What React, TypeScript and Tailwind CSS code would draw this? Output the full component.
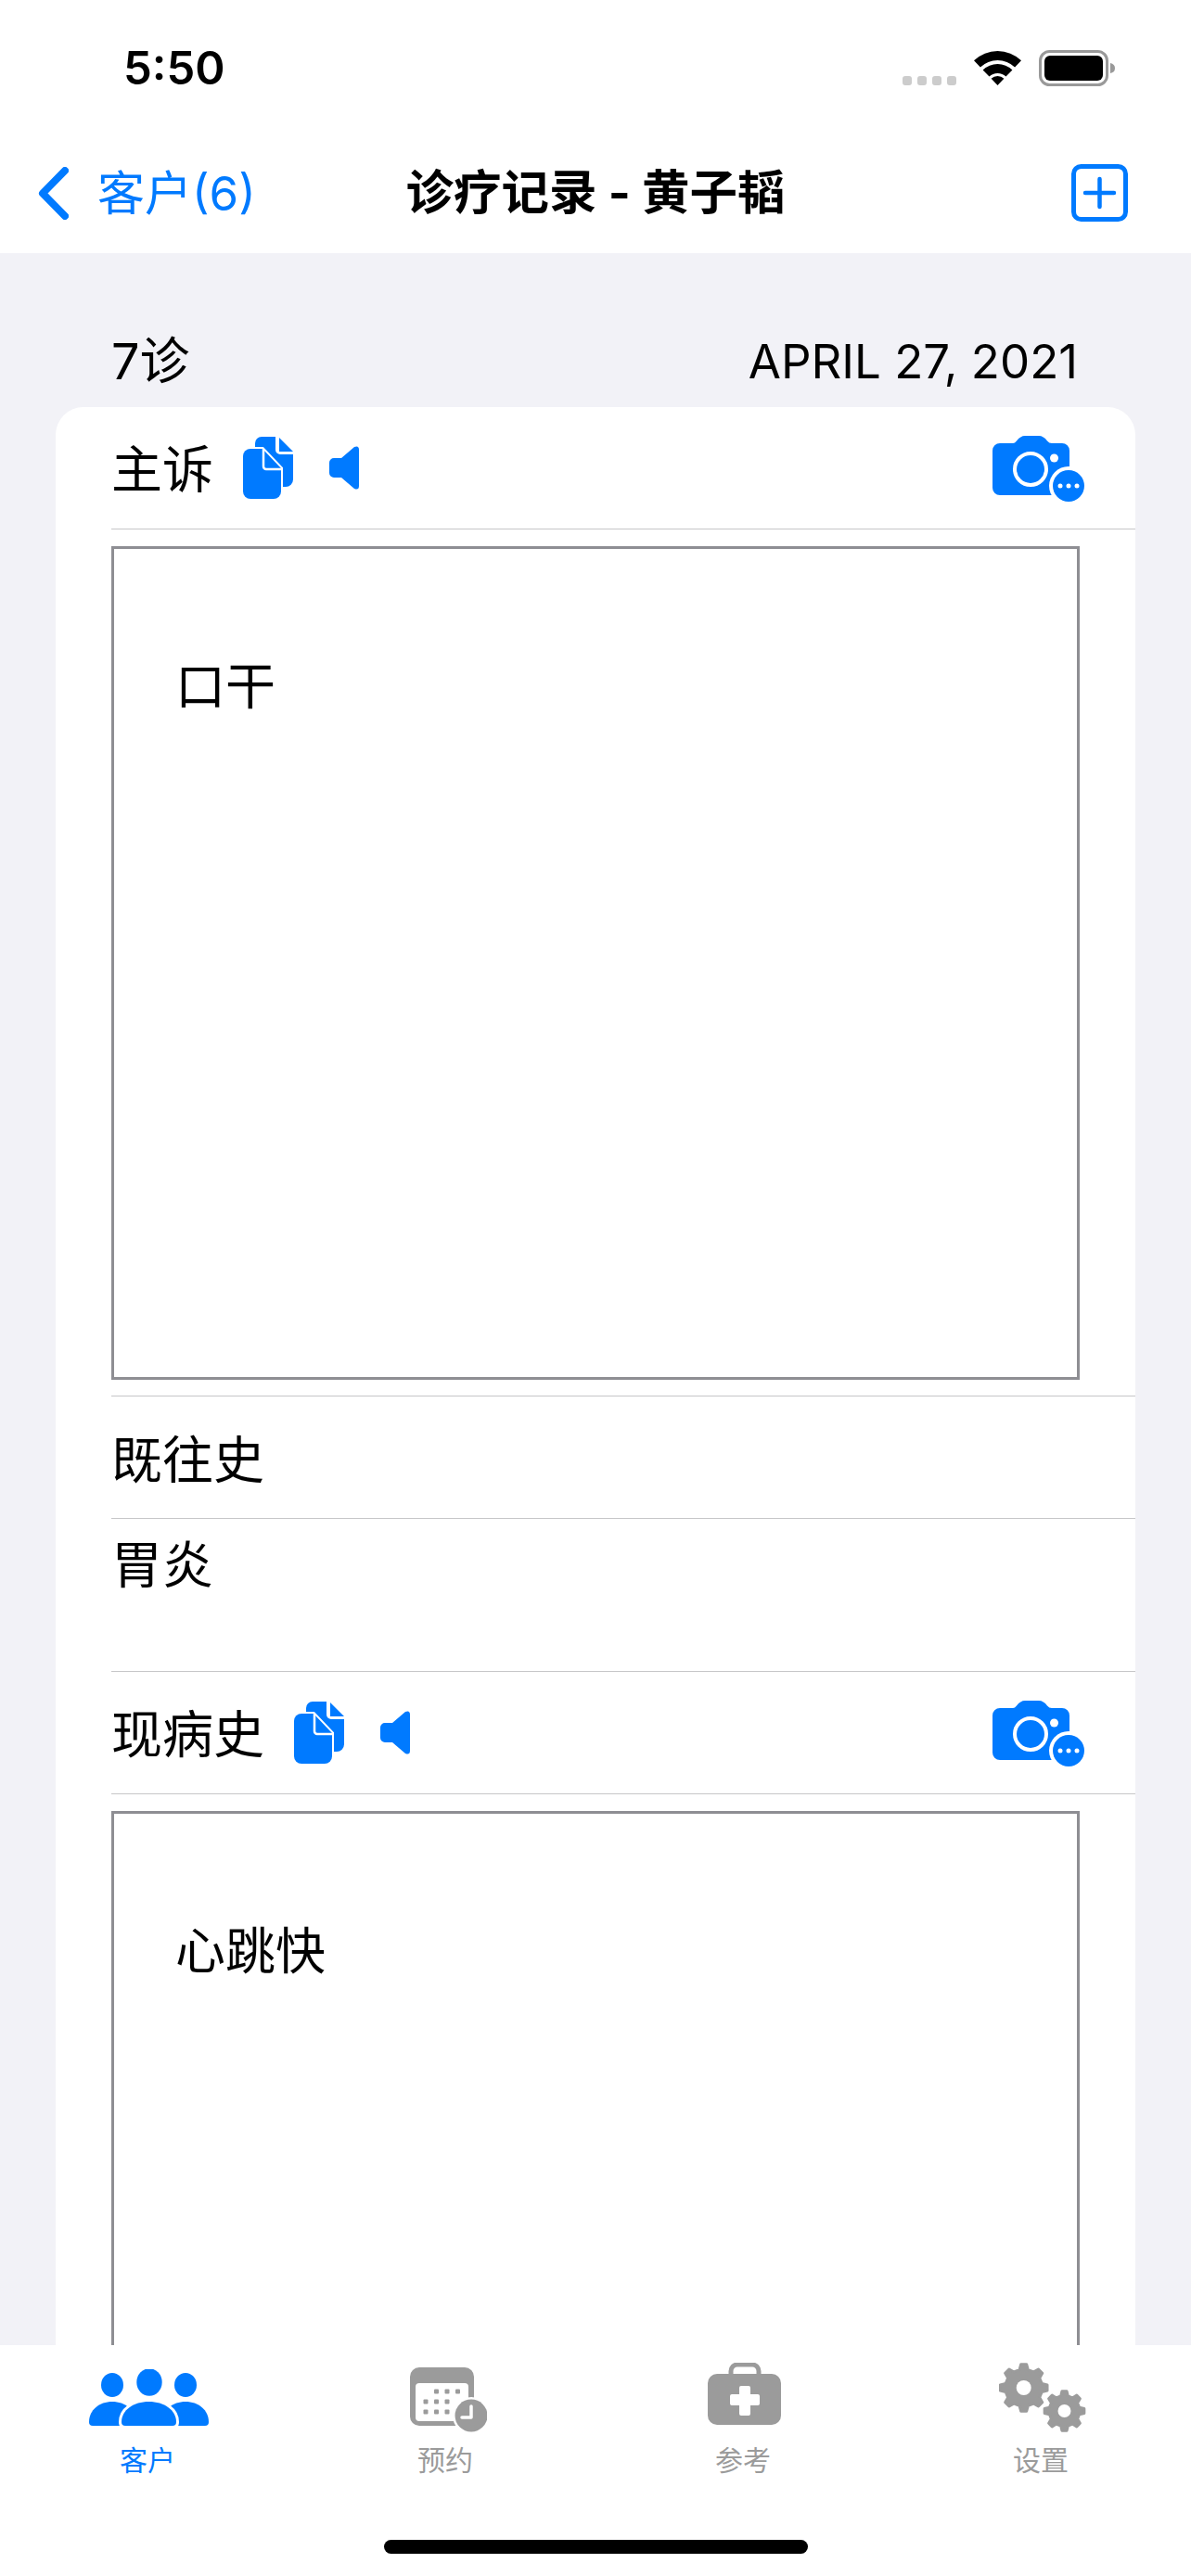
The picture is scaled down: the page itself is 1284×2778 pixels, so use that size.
import React from "react";

const BLUE = "#007aff";
const GREY = "#9b9b9b";

// outline of a cog with n teeth, in the svg's own pixels
const gearPath = (cx: number, cy: number, outer: number, root: number, n: number) => {
  const pts: string[] = [];
  const step = (Math.PI * 2) / n;
  for (let i = 0; i < n; i++) {
    const a = i * step - Math.PI / 2;
    [
      [root, a - step * 0.3],
      [outer, a - step * 0.15],
      [outer, a + step * 0.15],
      [root, a + step * 0.3],
    ].forEach(([r, t]) => {
      pts.push(`${(cx + r * Math.cos(t)).toFixed(2)} ${(cy + r * Math.sin(t)).toFixed(2)}`);
    });
  }
  return `M${pts.join("L")}Z`;
};

const DocIcon = () => (
  <svg width="54" height="67" viewBox="0 0 54 67" className="shrink-0">
    <path fill={BLUE} d="M20 0H35V14a5 5 0 0 0 5 5H54V46a8 8 0 0 1-8 8H20a7 7 0 0 1-7-7V7a7 7 0 0 1 7-7z" />
    <path fill={BLUE} d="M39 1L54 16H39z" />
    <path
      fill={BLUE}
      stroke="#fff"
      strokeWidth="4"
      style={{ paintOrder: "stroke" }}
      d="M8 13H21L41 34V59a8 8 0 0 1-8 8H8a8 8 0 0 1-8-8V21a8 8 0 0 1 8-8z"
    />
    <path fill="none" stroke="#fff" strokeWidth="2.5" d="M22 13V32a3 3 0 0 0 3 3H43" />
  </svg>
);

const SpeakerIcon = () => (
  <svg width="32" height="47" viewBox="0 0 32 47" className="shrink-0">
    <path fill={BLUE} d="M5 13H13L27 1Q32-1 32 4V43Q32 48 27 46L13 34H5a5 5 0 0 1-5-5V18a5 5 0 0 1 5-5z" />
  </svg>
);

const CameraIcon = () => (
  <svg width="99" height="71" viewBox="0 0 99 71" className="shrink-0">
    <path
      fill={BLUE}
      d="M8 8H22Q24 8 26 5.500Q30 0 35 0H50Q55 0 59 5.500Q61 8 64 8H75a8 8 0 0 1 8 8V56a8 8 0 0 1-8 8H8a8 8 0 0 1-8-8V16a8 8 0 0 1 8-8z"
    />
    <circle cx="41" cy="36" r="17" fill="none" stroke="#fff" strokeWidth="4" />
    <circle cx="66.500" cy="24" r="4.500" fill="#fff" />
    <circle cx="82" cy="54" r="21" fill="#fff" />
    <circle cx="82" cy="54" r="17" fill={BLUE} />
    <circle cx="73" cy="54" r="2.500" fill="#fff" />
    <circle cx="82" cy="54" r="2.500" fill="#fff" />
    <circle cx="91" cy="54" r="2.500" fill="#fff" />
  </svg>
);

const PeopleIcon = () => (
  <svg width="129" height="61" viewBox="0 0 129 61">
    <ellipse cx="25" cy="17" rx="12" ry="13" fill={BLUE} />
    <ellipse cx="104" cy="17" rx="12" ry="13" fill={BLUE} />
    <ellipse cx="65" cy="14" rx="13.700" ry="14.700" fill={BLUE} />
    <path fill={BLUE} d="M0 57C0 44 11 35 25 35S50 44 50 57Q50 61 46 61H4Q0 61 0 57z" />
    <path fill={BLUE} d="M79 57C79 44 90 35 104 35S129 44 129 57Q129 61 125 61H83Q79 61 79 57z" />
    <path
      fill={BLUE}
      stroke="#fff"
      strokeWidth="6"
      style={{ paintOrder: "stroke" }}
      d="M35 57C35 44 48 35 64.500 35S94 44 94 57Q94 61 90 61H39Q35 61 35 57z"
    />
  </svg>
);

const CalendarIcon = () => {
  const dots = [
    [28.500, 26], [40, 26], [51.500, 26],
    [17, 37], [28.500, 37], [40, 37],
    [17, 48], [28.500, 48], [40, 48],
  ];
  return (
    <svg width="83" height="70" viewBox="0 0 83 70" className="ml-[4px] mt-[5px]">
      <rect x="0" y="0" width="69" height="63" rx="10" fill={GREY} />
      <rect x="6" y="17" width="57" height="41" rx="4" fill="#fff" />
      {dots.map(([x, y]) => (
        <rect key={`${x}-${y}`} x={x - 2.500} y={y - 2.500} width="5" height="5" rx="1" fill={GREY} />
      ))}
      <circle cx="66" cy="52" r="20" fill="#fff" />
      <circle cx="66" cy="52" r="17.500" fill={GREY} />
      <path d="M66 42V54H56" fill="none" stroke="#fff" strokeWidth="3.500" strokeLinecap="round" strokeLinejoin="round" />
    </svg>
  );
};

const CaseIcon = () => (
  <svg width="79" height="67" viewBox="0 0 79 67" className="mb-[8px]">
    <path d="M25 14V9a7 7 0 0 1 7-7H48a7 7 0 0 1 7 7V14" fill="none" stroke={GREY} strokeWidth="5" />
    <rect x="0" y="12" width="79" height="55" rx="10" fill={GREY} />
    <path
      fill="#fff"
      d="M34 27a2 2 0 0 1 2-2H44a2 2 0 0 1 2 2V34H54a2 2 0 0 1 2 2V44a2 2 0 0 1-2 2H46V55a2 2 0 0 1-2 2H36a2 2 0 0 1-2-2V46H26a2 2 0 0 1-2-2V36a2 2 0 0 1 2-2H34z"
    />
  </svg>
);

const GearsIcon = () => (
  <svg width="94" height="75" viewBox="0 0 94 75">
    <path d={gearPath(26.700, 27, 25.500, 20, 8)} fill={GREY} stroke={GREY} strokeWidth="3" strokeLinejoin="round" />
    <circle cx="26.700" cy="27" r="8" fill="#fff" />
    <path d={gearPath(70.500, 52, 21.500, 16.500, 8)} fill={GREY} stroke={GREY} strokeWidth="3" strokeLinejoin="round" />
    <circle cx="70.500" cy="52" r="7" fill="#fff" />
  </svg>
);

const StatusBar = () => (
  <div className="flex h-[146px] items-center justify-between pl-[133px] pr-[82px]">
    <span className="text-[49px] font-semibold leading-none text-black">5:50</span>
    <div className="flex items-end gap-[19px]">
      <div className="mb-[1px] flex gap-[6px]">
        {[0, 1, 2, 3].map((i) => (
          <div key={i} className="h-[10px] w-[10px] rounded-[3px] bg-[#cccccc]" />
        ))}
      </div>
      <svg width="51" height="37" viewBox="0 0 51 37" className="mb-[1px]">
        <path d="M0 10.200A37 37 0 0 1 51 10.200L44.100 17.500A27 27 0 0 0 6.900 17.500Z" />
        <path d="M9.600 20.400A23 23 0 0 1 41.400 20.400L34.500 27.600A13 13 0 0 0 16.500 27.600Z" />
        <path d="M18.600 29.800A10 10 0 0 1 32.400 29.800L25.500 37Z" />
      </svg>
      <svg width="82" height="39" viewBox="0 0 82 39">
        <rect x="1.500" y="1.500" width="72" height="36" rx="10" fill="none" stroke="#999" strokeWidth="3" />
        <rect x="6" y="6" width="63" height="27" rx="6" fill="#000" />
        <path d="M77 14Q82 15 82 19.500Q82 24 77 25z" fill="#999" />
      </svg>
    </div>
  </div>
);

const NavBar = () => (
  <div className="grid h-[124px] grid-cols-[1fr_auto_1fr] items-center">
    <div className="flex items-center pl-[41px] text-[#007aff]">
      <svg width="33" height="57" viewBox="0 0 33 57">
        <path d="M29 4L5 28.500L29 53" fill="none" stroke={BLUE} strokeWidth="8" strokeLinecap="round" strokeLinejoin="round" />
      </svg>
      <span className="ml-[31px] text-[51px] leading-none">客户(6)</span>
    </div>
    <span className="text-[51.500px] font-bold leading-none text-black">诊疗记录 - 黄子韬</span>
    <div className="flex justify-end pr-[68px]">
      <svg width="61" height="62" viewBox="0 0 61 62">
        <rect x="2.500" y="2.500" width="56" height="57" rx="8" fill="none" stroke={BLUE} strokeWidth="5" />
        <path d="M15 31H46M30.500 16V46" fill="none" stroke={BLUE} strokeWidth="4.500" strokeLinecap="round" />
      </svg>
    </div>
  </div>
);

const IconRow = ({ label }: { label: string }) => (
  <div className="flex h-[132px] items-center border-b border-[#c6c6c8] pr-[55px]">
    <span className="mt-[3px] text-[55px] leading-none text-black">{label}</span>
    <div className="ml-[32px] flex items-center gap-[39px]">
      <DocIcon />
      <SpeakerIcon />
    </div>
    <div className="ml-auto mt-[2px]">
      <CameraIcon />
    </div>
  </div>
);

const NoteBox = ({ text }: { text: string }) => (
  <div className="h-[899px] w-[1044px] shrink-0 border-[3px] border-[#8e8e93] pl-[66px] pt-[122px] text-[54px] leading-[54px] text-black">
    {text}
  </div>
);

const tabs = [
  { label: "客户", icon: <PeopleIcon />, active: true },
  { label: "预约", icon: <CalendarIcon />, active: false },
  { label: "参考", icon: <CaseIcon />, active: false },
  { label: "设置", icon: <GearsIcon />, active: false },
];

const TabBar = () => (
  <div className="shrink-0 bg-white pt-[19px]">
    <div className="grid grid-cols-4">
      {tabs.map((tab) => (
        <div key={tab.label} className="flex flex-col items-center">
          <div className="flex h-[75px] items-center justify-center">{tab.icon}</div>
          <span
            className={`mt-[15px] pr-[3px] text-[30px] leading-[30px] ${
              tab.active ? "text-[#007aff]" : "text-[#9b9b9b]"
            }`}
          >
            {tab.label}
          </span>
        </div>
      ))}
    </div>
    <div className="mx-auto mb-[24px] mt-[71px] h-[15px] w-[457px] rounded-full bg-black" />
  </div>
);

export default function App() {
  return (
    <div className="flex h-[2778px] w-[1284px] flex-col overflow-hidden bg-white font-['Inter','Noto_Sans_CJK_SC',sans-serif]">
      <div className="h-[273px] shrink-0 bg-white">
        <StatusBar />
        <NavBar />
      </div>

      <div className="min-h-0 flex-1 overflow-hidden bg-[#f2f2f7]">
        <div className="flex h-[166px] items-end justify-between pb-[22px] pl-[120px] pr-[122px] text-[54px] leading-[54px] text-black">
          <span>7诊</span>
          <span className="text-[51px]">APRIL 27, 2021</span>
        </div>

        <div className="mx-[60px] rounded-t-[30px] bg-white pl-[60px]">
          <IconRow label="主诉" />
          <div className="border-b border-[#c6c6c8] pb-[17px] pt-[18px]">
            <NoteBox text="口干" />
          </div>
          <div className="flex h-[132px] items-center border-b border-[#c6c6c8] pt-[5px] text-[55px] leading-none text-black">
            既往史
          </div>
          <div className="h-[165px] border-b border-[#c6c6c8] pt-[22px] text-[55px] leading-none text-black">
            胃炎
          </div>
          <IconRow label="现病史" />
          <div className="pt-[18px]">
            <NoteBox text="心跳快" />
          </div>
        </div>
      </div>

      <TabBar />
    </div>
  );
}
